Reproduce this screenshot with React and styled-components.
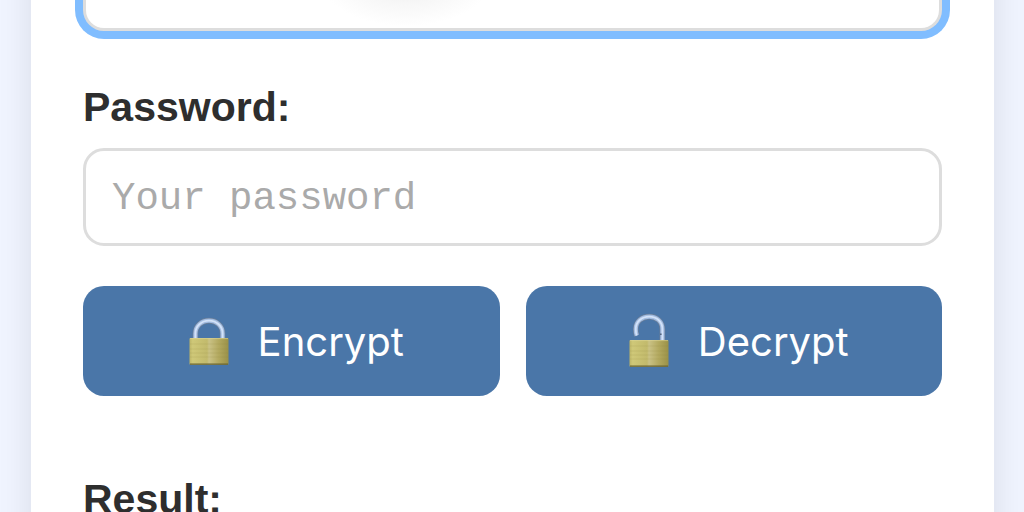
import React from 'react'
import styled, { createGlobalStyle } from 'styled-components'

const GlobalStyle = createGlobalStyle`
    * {
        box-sizing: border-box;
    }
    body {
        margin: 0;
        background: #f0f4ff;
        font-family: "Liberation Sans", Arial, sans-serif;
        color: #2e2e2e;
    }
`

const Page = styled.main`
    height: 100vh;
    padding: 0 30px 0 31px;
    overflow: hidden;
`

const Card = styled.form`
    min-height: calc(100% + 120px);
    display: flex;
    flex-direction: column;
    margin-top: -60px;
    padding: 60px 52px;
    background: #fff;
    box-shadow: 0 0 32px rgba(0, 0, 0, 0.1);
`

const Message = styled.textarea`
    display: block;
    width: 100%;
    height: 31px;
    margin-bottom: 52px;
    padding: 0 26px;
    border: 3px solid #ddd;
    border-top: none;
    border-radius: 0 0 21px 21px;
    outline: none;
    resize: none;
    overflow: hidden;
    background: radial-gradient(ellipse 84px 44px at 320px -18px, #ebebeb, #f7f7f7 50%, #fff) #fff;
    box-shadow: 0 0 0 8px #80bdff;
`

const Label = styled.label`
    font-size: 41px;
    font-weight: bold;
    line-height: 48px;
`

const PasswordInput = styled.input`
    width: 100%;
    height: 98px;
    margin: 17px 0 40px;
    padding: 4px 26px 0;
    border: 3px solid #ddd;
    border-radius: 21px;
    outline: none;
    background: #fff;
    color: #333;
    font-family: "Courier New", "Liberation Mono", monospace;
    font-size: 39px;
    &::placeholder {
        color: #aaa;
        opacity: 1;
    }
`

const Buttons = styled.div`
    display: flex;
    gap: 26px;
    margin-bottom: 79px;
`

const Button = styled.button`
    flex: 1;
    height: 110px;
    display: flex;
    align-items: center;
    justify-content: center;
    gap: 19px;
    padding: 0;
    border: none;
    border-radius: 21px;
    background: #4a76a8;
    color: #fff;
    font-family: Inter, sans-serif;
    font-size: 40px;
    cursor: pointer;
`

const Icon = styled.svg`
    width: 60px;
    height: 60px;
    flex: none;
`

const Padlock = ({ open }) => {
  const id = open ? 'open' : 'closed'
  const top = open ? 29 : 27
  const shackle = open
    ? 'M17.8 24.5 C16.7 22 16.8 20 16.8 18 C16.8 10.5 22.8 5.6 30.2 5.6 C37.6 5.6 43.4 10.5 43.4 18 V29'
    : 'M16.4 28 V22.5 C16.4 15 22.5 9.6 30 9.6 C37.5 9.6 43.6 15 43.6 22.5 V28'

  return (
      <Icon viewBox='0 0 60 60' aria-hidden='true'>
          <defs>
              <linearGradient id={`brass-${id}`} x1='0' x2='1' y1='0' y2='0'>
                  <stop offset='0' stopColor='#bdb568' />
                  <stop offset='0.08' stopColor='#cfc878' />
                  <stop offset='0.45' stopColor='#c2ba6c' />
                  <stop offset='0.5' stopColor='#cac286' />
                  <stop offset='0.75' stopColor='#b3a95f' />
                  <stop offset='1' stopColor='#9a9148' />
              </linearGradient>
          </defs>
          <path d={shackle} fill='none' stroke='#6c7f98' strokeWidth='5.6' />
          <path d={shackle} fill='none' stroke='#a3bde2' strokeWidth='4.2' />
          <path d={shackle} fill='none' stroke='#d3e2f8' strokeWidth='1.8' />
          {open && <path d='M41 22.4 H42.6 V24 H41 Z' fill='#52647c' />}
          <rect x='10.5' y={top} width='39' height='26.8' rx='1' fill={`url(#brass-${id})`} />
          <path d={`M11 ${top + 0.6} H49`} stroke='#ded89a' strokeWidth='1' opacity='0.6' />
          <path
              d={`M11 ${top + 6} H49 M11 ${top + 11} H49 M11 ${top + 15} H49 M11 ${top + 19} H49`}
              stroke='#8f853d'
              strokeWidth='0.6'
              opacity='0.25'
          />
          <path d={`M11 ${top + 26.2} H49`} stroke='#6b6430' strokeWidth='1.2' />
      </Icon>
  )
}

const App = () => {
  return (
      <>
          <GlobalStyle />
          <Page>
              <Card onSubmit={(e) => e.preventDefault()}>
                  <Message aria-label='Message' />
                  <Label htmlFor='password'>Password:</Label>
                  <PasswordInput id='password' type='password' placeholder='Your password' />
                  <Buttons>
                      <Button type='button'>
                          <Padlock />
                          Encrypt
                      </Button>
                      <Button type='button'>
                          <Padlock open />
                          Decrypt
                      </Button>
                  </Buttons>
                  <Label as='div'>Result:</Label>
              </Card>
          </Page>
      </>
  )
}

export default App
